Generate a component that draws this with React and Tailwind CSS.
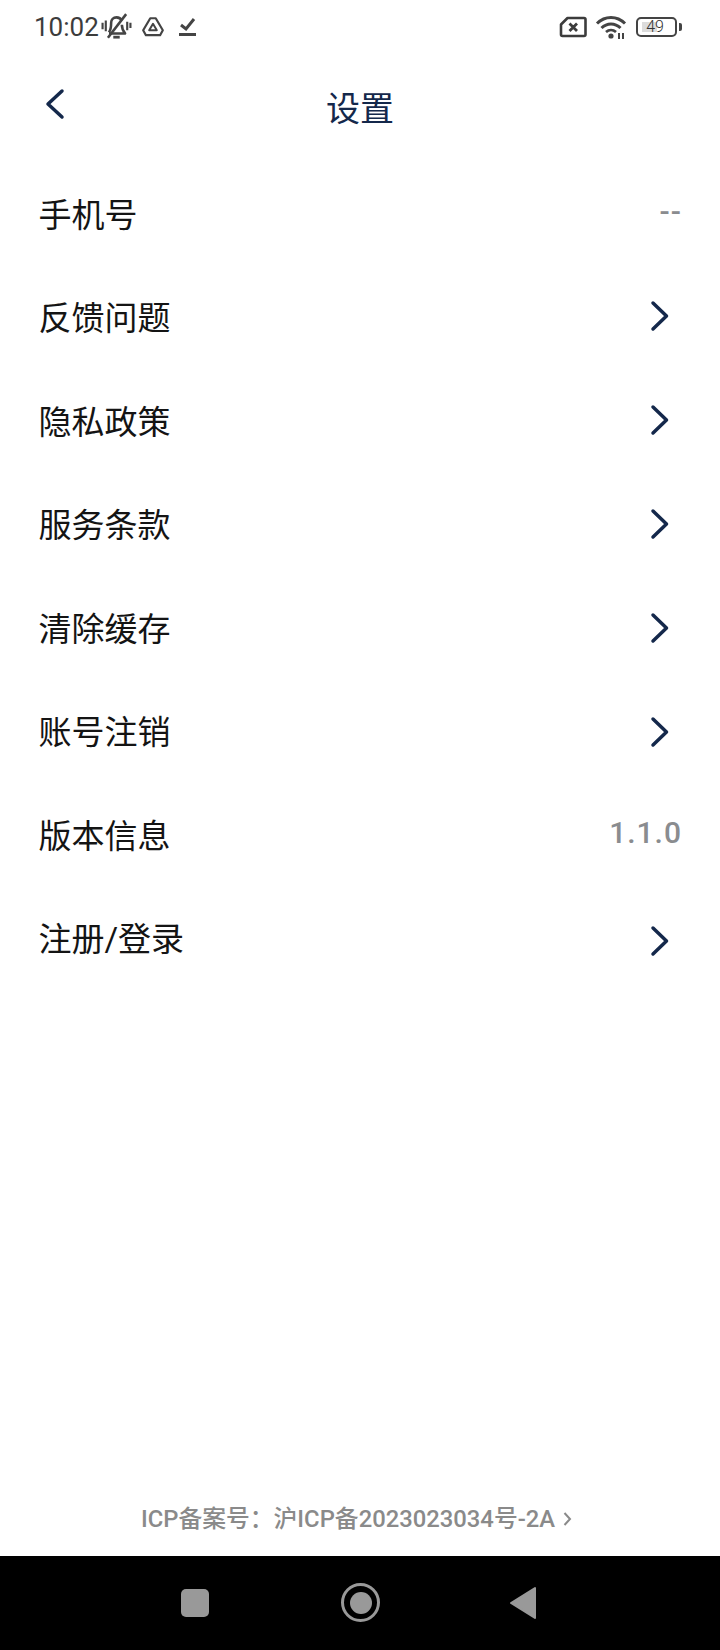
const CJK = "font-['Roboto','Noto_Sans_CJK_SC',sans-serif]";

function Chevron() {
  return (
    <svg width="22" height="32" viewBox="0 0 22 32" fill="none" className="block">
      <path d="M4 3 L17.5 16 L4 29" stroke="#14284b" strokeWidth="3.500" strokeLinecap="round" strokeLinejoin="round" />
    </svg>
  );
}

function BackChevron() {
  return (
    <svg width="22" height="32" viewBox="0 0 22 32" fill="none" className="block">
      <path d="M18 3 L4 16 L18 29" stroke="#14284b" strokeWidth="3.500" strokeLinecap="round" strokeLinejoin="round" />
    </svg>
  );
}

function StatusLeft() {
  return (
    <div className="flex items-center">
      <span className="text-[26px] leading-[30px] text-[#3c3c3c] ml-[34px] w-[67px]">10:02</span>
      <svg width="33" height="30" viewBox="0 0 30 28" fill="none" stroke="#444" strokeWidth="2.400" className="-ml-[1px]">
        <path d="M8 19 C10 16 10 13 10 10 C10 7 12 5 15 5 C17 5 19 6 20 8 M20 12 C20 15 20.500 17 23 20 L8 20" strokeLinejoin="round" />
        <path d="M12 23.500 H18" strokeWidth="2.600" />
        <path d="M7 24 L24 2" />
        <path d="M2 10 V16 M5 8 V18 M25 9 V17 M28 10 V15" strokeWidth="2" />
      </svg>
      <svg width="24" height="24" viewBox="0 0 22 22" fill="none" stroke="#444" className="ml-[8px]">
        <path d="M8.500 3 H13.500 L20 14 L17.500 18.500 H4.500 L2 14 Z" strokeWidth="2" strokeLinejoin="round" />
        <path d="M11 8 L14.500 14 H7.500 Z" strokeWidth="1.800" strokeLinejoin="round" />
      </svg>
      <svg width="20" height="22" viewBox="0 0 20 22" fill="none" stroke="#444" className="ml-[13px]">
        <path d="M3 9 L8 13 L16 3" strokeWidth="3" />
        <path d="M1 18.500 H18" strokeWidth="3" />
      </svg>
    </div>
  );
}

function StatusRight() {
  return (
    <div className="flex items-center">
      <svg width="28" height="22" viewBox="0 0 28 22" fill="none" stroke="#3c3c3c" className="block">
        <path d="M8.500 2 H25 Q26.500 2 26.500 3.500 V18.500 Q26.500 20 25 20 H3.500 Q2 20 2 18.500 V8.500 Z" strokeWidth="2.600" strokeLinejoin="round" />
        <path d="M10.500 7.500 L18 15 M18 7.500 L10.500 15" strokeWidth="2.800" />
      </svg>
      <svg width="32" height="26" viewBox="0 0 32 26" fill="none" stroke="#444" className="ml-[8px]">
        <path d="M2 9.500 C10 1.500 22 1.500 30 9.500" strokeWidth="3" />
        <path d="M6.500 14 C12 8.500 20 8.500 25.500 14" strokeWidth="3" />
        <path d="M11 18 C14 15.500 18 15.500 21 18" strokeWidth="2.800" />
        <circle cx="16" cy="22" r="2.600" fill="#444" stroke="none" />
        <path d="M24 19 V25 M28 19 V25" strokeWidth="2" />
      </svg>
      <div className="ml-[9px] w-[41px] h-[20px] rounded-[5px] border-2 border-[#444] flex items-center justify-center relative">
        <div className="absolute left-[4px] top-[3px] bottom-[3px] w-[15px] bg-[#dcdcdc]"></div>
        <span className="relative text-[16px] leading-none font-light text-[#333] -ml-[3px]">49</span>
      </div>
      <div className="ml-[2px] w-[3px] h-[8px] bg-[#444] rounded-r-[2px]"></div>
    </div>
  );
}

const rows = [
  { label: "手机号", value: "--" },
  { label: "反馈问题" },
  { label: "隐私政策" },
  { label: "服务条款" },
  { label: "清除缓存" },
  { label: "账号注销" },
  { label: "版本信息", value: "1.1.0" },
  { label: "注册/登录" },
];

function Row({ label, value, index }) {
  return (
    <div className="h-[103.500px] flex items-center justify-between pl-[38.500px] pr-[38px]">
      <span className="text-[33px] leading-[44px] text-[#141414]">{label}</span>
      {value ? (
        <span className="text-[30px] leading-[40px] font-medium tracking-[1px] text-[#8a8c8f] -mt-[7px]">{value}</span>
      ) : (
        <span className="mr-[11px]" style={{ marginTop: 2 * (-4.17 + 0.67 * index) }}><Chevron /></span>
      )}
    </div>
  );
}

export default function App() {
  return (
    <div className={`w-[720px] h-[1650px] bg-white flex flex-col ${CJK}`}>
      <div className="h-[54px] flex items-center justify-between pr-[38px]">
        <StatusLeft />
        <StatusRight />
      </div>
      <div className="h-[108px] flex items-center relative justify-center pt-[2px]">
        <span className="absolute left-[44px] top-[34px]"><BackChevron /></span>
        <span className="text-[34px] leading-[44px] text-[#14284b]">设置</span>
      </div>
      <div className="pt-[2px]">
        {rows.map((r, i) => (
          <Row key={r.label} label={r.label} value={r.value} index={i} />
        ))}
      </div>
      <div className="flex-1 flex items-end justify-center pb-[20px] pr-[7px] gap-[8px]">
        <span className="text-[23.800px] leading-[34px] font-medium text-[#8a8a8a]">ICP备案号：沪ICP备2023023034号-2A</span>
        <svg width="9" height="16" viewBox="0 0 9 16" fill="none" className="mb-[9px]">
          <path d="M1.500 2 L7 8 L1.500 14" stroke="#8a8a8a" strokeWidth="2" />
        </svg>
      </div>
      <div className="h-[94px] bg-black flex items-center justify-center relative">
        <div className="absolute left-[181px] top-[33px] w-[28px] h-[28px] rounded-[5px] bg-[#999]"></div>
        <div className="absolute left-[341px] top-[27px] w-[39px] h-[39px] rounded-full border-[3px] border-[#999] flex items-center justify-center">
          <div className="w-[22px] h-[22px] rounded-full bg-[#999]"></div>
        </div>
        <svg width="30" height="36" viewBox="0 0 30 36" className="absolute left-[508px] top-[29px]">
          <path d="M27 3 V33 L3 18 Z" fill="#999" stroke="#999" strokeWidth="2" strokeLinejoin="round" />
        </svg>
      </div>
    </div>
  );
}
